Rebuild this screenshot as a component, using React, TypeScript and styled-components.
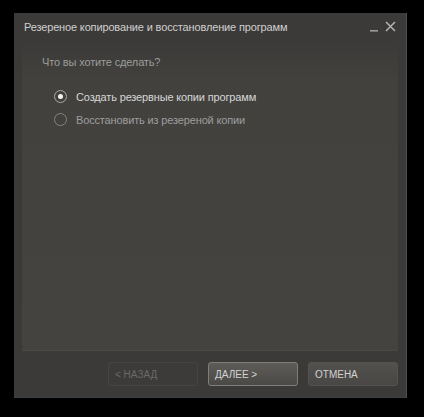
import React, { useState } from "react";
import styled, { createGlobalStyle } from "styled-components";

const GlobalStyle = createGlobalStyle`
  html, body {
    margin: 0;
    padding: 0;
    background: #000;
  }
  body {
    font-family: "Liberation Sans", Arial, sans-serif;
  }
`;

const Screen = styled.div`
  width: 424px;
  height: 417px;
  background: #000;
  padding: 13px 0 0 14px;
  box-sizing: border-box;
`;

const Window = styled.div`
  width: 393px;
  height: 385px;
  box-sizing: border-box;
  background: #3b3a38;
  border-right: 1px solid #4a5058;
  border-bottom: 1px solid #3e4248;
  display: flex;
  flex-direction: column;
`;

const TitleBar = styled.div`
  height: 27px;
  display: flex;
  align-items: center;
  padding: 0 10px 0 10px;
  flex-shrink: 0;
`;

const Title = styled.div`
  flex: 1;
  color: #cfcfcf;
  font-size: 11px;
  letter-spacing: -0.15px;
  padding-top: 1px;
`;

const WinButtons = styled.div`
  display: flex;
  align-items: center;
  gap: 6px;
`;

const Panel = styled.div`
  margin: 0 8px;
  height: 311px;
  background: linear-gradient(#3b3a38 0px, #42413e 40px, #444340 100%);
  border-bottom: 1px solid #4a4946;
  padding: 16px 0 0 20px;
  box-sizing: border-box;
`;

const Question = styled.div`
  color: #9d9d9d;
  font-size: 11px;
  letter-spacing: -0.15px;
  margin-bottom: 22px;
`;

const Options = styled.div`
  display: flex;
  flex-direction: column;
  gap: 10px;
  padding-left: 12px;
`;

const Option = styled.label<{ $active: boolean }>`
  display: flex;
  align-items: center;
  gap: 9px;
  font-size: 11px;
  letter-spacing: -0.15px;
  color: ${(p) => (p.$active ? "#d6d6d6" : "#9e9e9e")};
  cursor: pointer;
  height: 13px;
`;

const RadioCircle = styled.span<{ $active: boolean }>`
  width: 11px;
  height: 11px;
  border-radius: 50%;
  border: 1.5px solid ${(p) => (p.$active ? "#a8a8a6" : "#858482")};
  display: flex;
  align-items: center;
  justify-content: center;
  flex-shrink: 0;
  &::after {
    content: "";
    width: 5px;
    height: 5px;
    border-radius: 50%;
    background: ${(p) => (p.$active ? "#f2f2f2" : "transparent")};
  }
`;

const Footer = styled.div`
  display: flex;
  justify-content: flex-end;
  gap: 10px;
  padding: 11px 8px 0 0;
`;

type Kind = "disabled" | "primary" | "normal";

const Button = styled.button<{ $kind: Kind }>`
  width: 90px;
  height: 24px;
  box-sizing: border-box;
  border-radius: 3px;
  font-family: "Liberation Sans", Arial, sans-serif;
  font-size: 10px;
  text-align: left;
  padding: 1px 6px 0;
  cursor: pointer;
  color: ${(p) => (p.$kind === "disabled" ? "#6b6a68" : "#d2d2d2")};
  border: 1px solid
    ${(p) =>
      p.$kind === "primary" ? "#807e7b" : p.$kind === "normal" ? "#545350" : "#464542"};
  background: ${(p) =>
    p.$kind === "primary"
      ? "linear-gradient(#5e5c59, #4a4946)"
      : p.$kind === "normal"
      ? "linear-gradient(#53514e, #484745)"
      : "#3c3b39"};
`;

export default function App() {
  const [choice, setChoice] = useState(0);
  const options = ["Создать резервные копии программ", "Восстановить из резереной копии"];

  return (
    <>
      <GlobalStyle />
      <Screen>
        <Window>
          <TitleBar>
            <Title>Резереное копирование и восстановление программ</Title>
            <WinButtons>
              <svg width="9" height="10" viewBox="0 0 9 10">
                <rect x="0" y="8" width="8" height="1.6" fill="#9c9b99" />
              </svg>
              <svg width="11" height="11" viewBox="0 0 11 11">
                <path d="M1 1 L10 10 M10 1 L1 10" stroke="#b5b4b2" strokeWidth="1.5" />
              </svg>
            </WinButtons>
          </TitleBar>
          <Panel>
            <Question>Что вы хотите сделать?</Question>
            <Options>
              {options.map((o, i) => (
                <Option key={o} $active={choice === i} onClick={() => setChoice(i)}>
                  <RadioCircle $active={choice === i} />
                  {o}
                </Option>
              ))}
            </Options>
          </Panel>
          <Footer>
            <Button $kind="disabled">&lt; НАЗАД</Button>
            <Button $kind="primary">ДАЛЕЕ &gt;</Button>
            <Button $kind="normal">ОТМЕНА</Button>
          </Footer>
        </Window>
      </Screen>
    </>
  );
}
